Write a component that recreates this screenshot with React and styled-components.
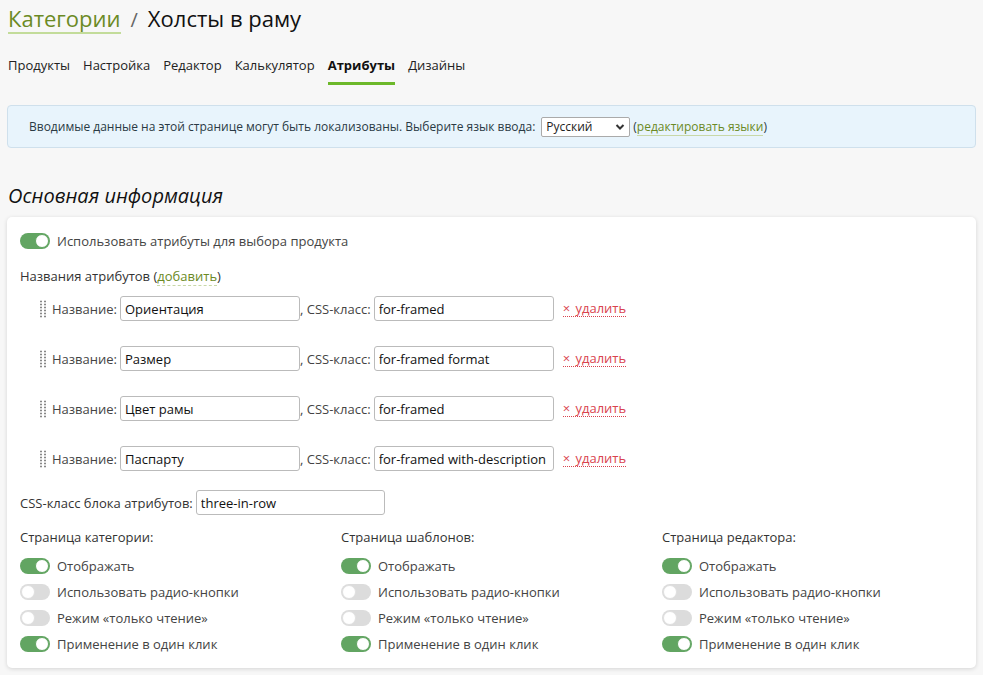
import React, { useState } from 'react';
import styled, { createGlobalStyle } from 'styled-components';

const GlobalStyle = createGlobalStyle`
  body {
    margin: 0;
    background: #f7f7f7;
    font-family: "Open Sans", "Noto Sans", sans-serif;
    font-size: 13px;
    color: #333;
  }
`;

const Page = styled.div`
  padding: 0 7px 8px 7px;
`;

const Title = styled.h1`
  margin: 0;
  padding: 4px 0 0 1px;
  font-size: 22px;
  font-weight: 400;
  line-height: 28px;
  color: #111;
  display: flex;
  align-items: baseline;
  gap: 10px;
`;

const Crumb = styled.a`
  color: #6b8a24;
  text-decoration: none;
  border-bottom: 2px solid #c3dc9a;
  line-height: 27px;
`;

const Slash = styled.span`
  color: #666;
  font-size: 20px;
`;

const Tabs = styled.nav`
  display: flex;
  gap: 13px;
  margin-top: 22px;
  padding-left: 1px;
`;

const Tab = styled.a`
  color: ${p => (p.$active ? '#111' : '#222')};
  font-weight: ${p => (p.$active ? 700 : 400)};
  text-decoration: none;
  padding-bottom: 8px;
  border-bottom: 3px solid ${p => (p.$active ? '#6cb82a' : 'transparent')};
  line-height: 18px;
`;

const Notice = styled.div`
  margin-top: 20px;
  height: 41px;
  background: #e8f4fc;
  border: 1px solid #cfe0ec;
  border-radius: 4px;
  display: flex;
  align-items: center;
  padding-left: 21px;
  font-size: 12px;
  color: #2a3a44;
  gap: 3px;
`;

const Select = styled.div`
  width: 89px;
  height: 20px;
  box-sizing: border-box;
  border: 1px solid #aaa;
  border-radius: 2px;
  background: #fff;
  display: flex;
  align-items: center;
  justify-content: space-between;
  padding: 0 4px 0 4px;
  margin-left: 3px;
  color: #222;
`;

const Link = styled.a`
  color: #6b8a24;
  text-decoration: none;
  border-bottom: 1px solid #c8d8a8;
`;

const SectionTitle = styled.h2`
  margin: 33px 0 0 1px;
  font-size: 20px;
  font-style: italic;
  font-weight: 400;
  color: #111;
  line-height: 30px;
`;

const Card = styled.div`
  margin-top: 6px;
  background: #fff;
  border-radius: 5px;
  box-shadow: 0 1px 4px rgba(0, 0, 0, 0.14);
  padding: 11px 13px 11px 13px;
`;

const ToggleRow = styled.label`
  display: flex;
  align-items: center;
  gap: 7px;
  height: 26px;
  color: #444;
`;

const Track = styled.span`
  position: relative;
  width: 30px;
  height: 16px;
  border-radius: 8px;
  background: ${p => (p.$on ? '#62a562' : '#dcdcdc')};
  flex-shrink: 0;
  cursor: pointer;
`;

const Knob = styled.span`
  position: absolute;
  top: 1px;
  left: ${p => (p.$on ? '15px' : '1px')};
  width: 14px;
  height: 14px;
  border-radius: 50%;
  background: #fff;
  box-sizing: border-box;
  border: 1px solid ${p => (p.$on ? '#62a562' : '#e0e0e0')};
`;

const Toggle = ({ initial, children }) => {
  const [on, setOn] = useState(initial);
  return (
    <ToggleRow onClick={() => setOn(v => !v)}>
      <Track $on={on}>
        <Knob $on={on} />
      </Track>
      {children}
    </ToggleRow>
  );
};

const Label = styled.div`
  margin-top: 13px;
  color: #333;
  line-height: 18px;
`;

const AddLink = styled.a`
  color: #6b8a24;
  text-decoration: none;
  border-bottom: 1px dashed #c8d8a8;
`;

const AttrList = styled.div`
  margin-top: 11px;
  padding-left: 19px;
  display: flex;
  flex-direction: column;
  gap: 25px;
`;

const AttrRow = styled.div`
  display: flex;
  align-items: center;
  color: #444;
  height: 25px;
`;

const Handle = styled.span`
  width: 7px;
  height: 18px;
  margin-right: 6px;
  background-image: radial-gradient(circle, #888 0.9px, transparent 1.2px);
  background-size: 4px 3px;
  cursor: move;
`;

const Input = styled.input`
  box-sizing: border-box;
  width: ${p => p.$w || 180}px;
  height: 25px;
  border: 1px solid #bbb;
  border-radius: 3px;
  padding: 0 4px;
  font: inherit;
  font-size: 13px;
  color: #111;
  margin-left: 3px;
`;

const Remove = styled.a`
  margin-left: 9px;
  color: #d9434e;
  text-decoration: none;
  border-bottom: 1px dotted #d9434e;
  line-height: 15px;
  word-spacing: 2px;
`;

const BlockRow = styled.div`
  display: flex;
  align-items: center;
  margin-top: 19px;
  color: #333;
`;

const Columns = styled.div`
  display: grid;
  grid-template-columns: 321px 321px 1fr;
  margin-top: 13px;
`;

const Column = styled.div`
  display: flex;
  flex-direction: column;
`;

const ColumnTitle = styled.div`
  line-height: 18px;
  margin-bottom: 7px;
  color: #333;
`;

const attrs = [
  ['Ориентация', 'for-framed'],
  ['Размер', 'for-framed format'],
  ['Цвет рамы', 'for-framed'],
  ['Паспарту', 'for-framed with-description'],
];

const pages = ['Страница категории:', 'Страница шаблонов:', 'Страница редактора:'];

const Chevron = () => (
  <svg width="10" height="8" viewBox="0 0 10 8">
    <path d="M1.5 2 L5 5.5 L8.5 2" stroke="#333" strokeWidth="2" fill="none" />
  </svg>
);

export default function App() {
  return (
    <Page>
      <GlobalStyle />
      <Title>
        <Crumb href="#">Категории</Crumb>
        <Slash>/</Slash>
        <span>Холсты в раму</span>
      </Title>
      <Tabs>
        <Tab href="#">Продукты</Tab>
        <Tab href="#">Настройка</Tab>
        <Tab href="#">Редактор</Tab>
        <Tab href="#">Калькулятор</Tab>
        <Tab href="#" $active>Атрибуты</Tab>
        <Tab href="#">Дизайны</Tab>
      </Tabs>
      <Notice>
        <span>Вводимые данные на этой странице могут быть локализованы. Выберите язык ввода:</span>
        <Select>
          <span>Русский</span>
          <Chevron />
        </Select>
        <span>
          (<Link href="#">редактировать языки</Link>)
        </span>
      </Notice>
      <SectionTitle>Основная информация</SectionTitle>
      <Card>
        <Toggle initial>Использовать атрибуты для выбора продукта</Toggle>
        <Label>
          Названия атрибутов (<AddLink href="#">добавить</AddLink>)
        </Label>
        <AttrList>
          {attrs.map(([name, cls]) => (
            <AttrRow key={name}>
              <Handle />
              Название:
              <Input defaultValue={name} />
              , CSS-класс:
              <Input defaultValue={cls} />
              <Remove href="#">× удалить</Remove>
            </AttrRow>
          ))}
        </AttrList>
        <BlockRow>
          CSS-класс блока атрибутов:
          <Input $w={189} defaultValue="three-in-row" />
        </BlockRow>
        <Columns>
          {pages.map(p => (
            <Column key={p}>
              <ColumnTitle>{p}</ColumnTitle>
              <Toggle initial>Отображать</Toggle>
              <Toggle initial={false}>Использовать радио-кнопки</Toggle>
              <Toggle initial={false}>Режим «только чтение»</Toggle>
              <Toggle initial>Применение в один клик</Toggle>
            </Column>
          ))}
        </Columns>
      </Card>
    </Page>
  );
}
